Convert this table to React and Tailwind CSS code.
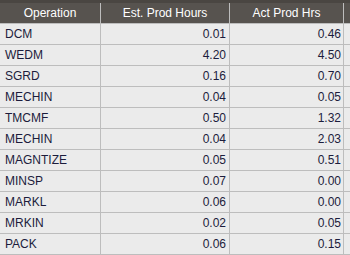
import React from "react";

const rows = [
  ["DCM", "0.01", "0.46"],
  ["WEDM", "4.20", "4.50"],
  ["SGRD", "0.16", "0.70"],
  ["MECHIN", "0.04", "0.05"],
  ["TMCMF", "0.50", "1.32"],
  ["MECHIN", "0.04", "2.03"],
  ["MAGNTIZE", "0.05", "0.51"],
  ["MINSP", "0.07", "0.00"],
  ["MARKL", "0.06", "0.00"],
  ["MRKIN", "0.02", "0.05"],
  ["PACK", "0.06", "0.15"],
];

export default function App() {
  return (
    <div
      className="w-[350px] h-[255px] overflow-hidden bg-[#ebebeb] text-[12px]"
      style={{ fontFamily: '"Liberation Sans", Arial, sans-serif' }}
    >
      <div className="h-[3px] bg-[#4a4642]" />
      <div className="grid grid-cols-[101px_129px_114px_1fr] h-[21px] bg-[#57534f] text-white border-b border-[#bdbdbd]">
        <div className="flex items-center justify-center border-r border-[#bdbdbd]">Operation</div>
        <div className="flex items-center justify-center border-r border-[#bdbdbd]">Est. Prod Hours</div>
        <div className="flex items-center justify-center border-r border-[#bdbdbd]">Act Prod Hrs</div>
        <div />
      </div>
      {rows.map((r, i) => (
        <div
          key={i}
          className="grid grid-cols-[101px_129px_114px_1fr] h-[21px] border-b border-[#bdbdbd] text-[#1c1c3c]"
        >
          <div className="flex items-center pl-[5px] border-r border-[#bdbdbd]">{r[0]}</div>
          <div className="flex items-center justify-end pr-[3px] border-r border-[#bdbdbd]">{r[1]}</div>
          <div className="flex items-center justify-end pr-[2px] border-r border-[#bdbdbd]">{r[2]}</div>
          <div />
        </div>
      ))}
    </div>
  );
}
